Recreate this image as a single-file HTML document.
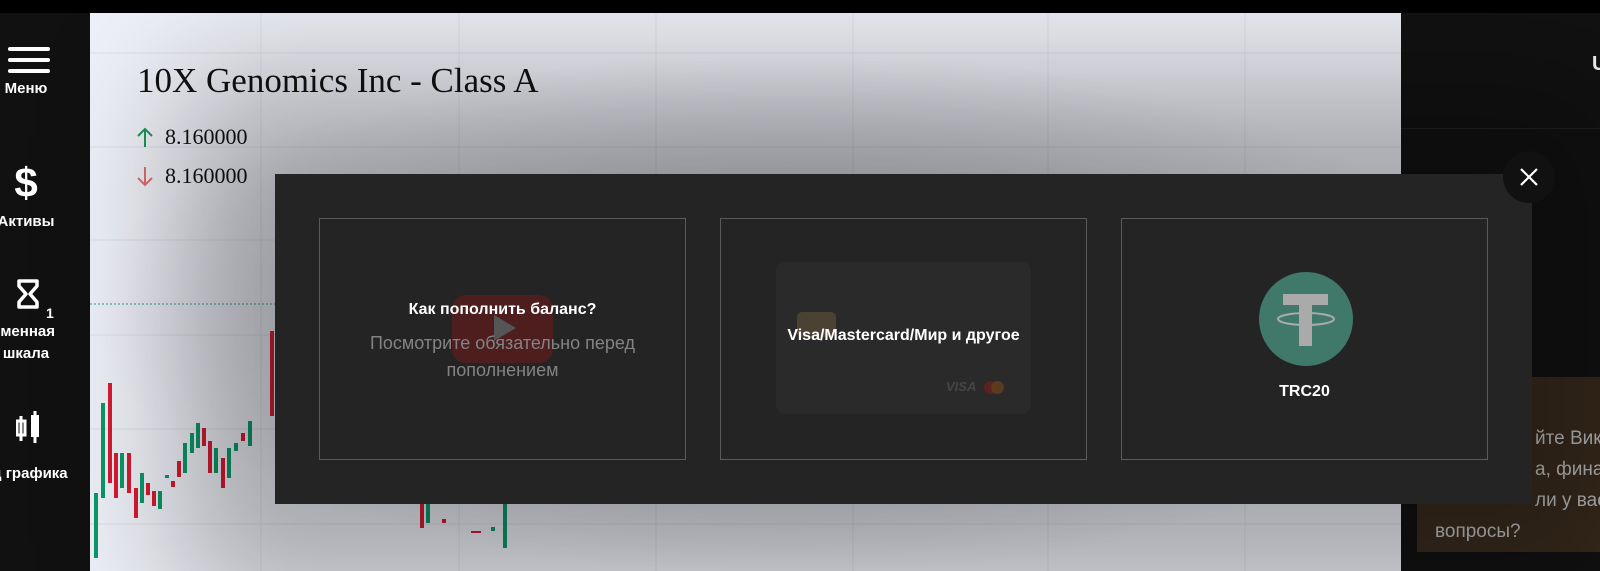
<!DOCTYPE html>
<html><head><meta charset="utf-8"><style>
*{margin:0;padding:0;box-sizing:border-box}
body{width:1600px;height:571px;overflow:hidden;background:#000;position:relative;font-family:"Liberation Sans",sans-serif}
.abs{position:absolute}
#side{left:0;top:13px;width:90px;height:558px;background:#111;color:#fff}
.lbl{position:absolute;width:90px;text-align:center;font-weight:bold;font-size:15px;white-space:nowrap}
#chart{left:90px;top:13px;width:1311px;height:558px;background:#eff1f8;overflow:hidden}
#right{left:1401px;top:13px;width:199px;height:558px;background:#121212}
#modal{left:275px;top:174px;width:1257px;height:330px;background:#242424;box-shadow:0 0 240px 100px rgba(0,0,0,.3)}
.card{position:absolute;top:44px;width:367px;height:242px;border:1px solid #5a5a5a}
.t{position:absolute;width:100%;text-align:center;color:#fff;font-weight:bold;font-size:16px}
</style></head><body>
<div id="chart" class="abs">
<svg width="1311" height="558" style="position:absolute;left:0;top:0">
<g stroke="#dfe1e8" stroke-width="1">
<line x1="171" y1="0" x2="171" y2="558"/><line x1="369" y1="0" x2="369" y2="558"/><line x1="566" y1="0" x2="566" y2="558"/><line x1="763" y1="0" x2="763" y2="558"/><line x1="958" y1="0" x2="958" y2="558"/><line x1="1155" y1="0" x2="1155" y2="558"/>
<line x1="0" y1="40" x2="1311" y2="40"/><line x1="0" y1="134" x2="1311" y2="134"/><line x1="0" y1="227" x2="1311" y2="227"/><line x1="0" y1="322" x2="1311" y2="322"/><line x1="0" y1="416" x2="1311" y2="416"/><line x1="0" y1="511" x2="1311" y2="511"/>
</g>
<line x1="0" y1="291" x2="190" y2="291" stroke="#2aa38a" stroke-dasharray="2,2"/>
<g>
<rect x="4" y="480" width="4" height="65" fill="#0a9a6a"/>
<rect x="11" y="390" width="4" height="95" fill="#0a9a6a"/>
<rect x="18" y="370" width="4" height="100" fill="#d91a33"/>
<rect x="24" y="440" width="4" height="45" fill="#d91a33"/>
<rect x="30" y="440" width="4" height="35" fill="#0a9a6a"/>
<rect x="37" y="440" width="4" height="40" fill="#d91a33"/>
<rect x="44" y="475" width="4" height="30" fill="#d91a33"/>
<rect x="50" y="460" width="4" height="30" fill="#0a9a6a"/>
<rect x="56" y="470" width="4" height="12" fill="#d91a33"/>
<rect x="62" y="478" width="4" height="15" fill="#d91a33"/>
<rect x="68" y="478" width="4" height="18" fill="#0a9a6a"/>
<rect x="75" y="462" width="4" height="3" fill="#0a9a6a"/>
<rect x="81" y="468" width="4" height="6" fill="#d91a33"/>
<rect x="87" y="448" width="4" height="16" fill="#d91a33"/>
<rect x="93" y="430" width="4" height="30" fill="#0a9a6a"/>
<rect x="100" y="420" width="4" height="20" fill="#0a9a6a"/>
<rect x="106" y="410" width="4" height="25" fill="#0a9a6a"/>
<rect x="112" y="415" width="4" height="18" fill="#d91a33"/>
<rect x="118" y="428" width="4" height="32" fill="#d91a33"/>
<rect x="124" y="435" width="4" height="25" fill="#0a9a6a"/>
<rect x="131" y="445" width="4" height="30" fill="#d91a33"/>
<rect x="137" y="435" width="4" height="30" fill="#0a9a6a"/>
<rect x="144" y="430" width="4" height="8" fill="#0a9a6a"/>
<rect x="151" y="420" width="4" height="8" fill="#d91a33"/>
<rect x="158" y="408" width="4" height="25" fill="#0a9a6a"/>
<rect x="180" y="318" width="4" height="85" fill="#d91a33"/>
<rect x="330" y="490" width="4" height="25" fill="#d91a33"/>
<rect x="336" y="490" width="4" height="20" fill="#0a9a6a"/>
<rect x="352" y="506" width="4" height="4" fill="#d91a33"/>
<rect x="381" y="518" width="10" height="2" fill="#d91a33"/>
<rect x="401" y="514" width="4" height="4" fill="#0a9a6a"/>
<rect x="413" y="490" width="4" height="45" fill="#0a9a6a"/>
</g>
<g fill="none" stroke-width="2">
<path d="M55 134V116M48 123l7-7 7 7" stroke="#159a5a"/>
<path d="M55 154V172M48 165l7 7 7-7" stroke="#e07070"/>
</g>
</svg>
<div class="abs" style="left:47px;top:48px;font-family:'Liberation Serif',serif;font-size:35px;color:#111">10X Genomics Inc - Class A</div>
<div class="abs" style="left:75px;top:111px;font-family:'Liberation Serif',serif;font-size:22px;color:#111">8.160000</div>
<div class="abs" style="left:75px;top:150px;font-family:'Liberation Serif',serif;font-size:22px;color:#111">8.160000</div>
<div class="abs" style="left:0;top:0;width:1311px;height:558px;background:radial-gradient(ellipse 700px 260px at 700px 300px,rgba(60,60,70,.35),rgba(60,60,70,0))"></div>
</div>
<div id="side" class="abs">
<div class="abs" style="left:8px;top:34px;width:42px;height:4px;background:#fff;border-radius:2px"></div>
<div class="abs" style="left:8px;top:45px;width:42px;height:4px;background:#fff;border-radius:2px"></div>
<div class="abs" style="left:8px;top:56px;width:42px;height:4px;background:#fff;border-radius:2px"></div>
<div class="lbl" style="left:-19px;top:67px">Меню</div>
<div class="lbl" style="left:-19px;top:146px;font-size:42px">$</div>
<div class="lbl" style="left:-19px;top:200px">Активы</div>
<svg class="abs" style="left:16px;top:266px" width="40" height="40"><path d="M3 2h18v5l-7 8 7 8v5H3v-5l7-8-7-8z" fill="none" stroke="#fff" stroke-width="3.5" stroke-linejoin="round"/><text x="30" y="39" fill="#fff" font-size="14" font-weight="bold" font-family="Liberation Sans">1</text></svg>
<div class="lbl" style="left:-26px;top:310px">ременная</div>
<div class="lbl" style="left:-19px;top:332px">шкала</div>
<svg class="abs" style="left:16px;top:398px" width="30" height="40"><rect x="1" y="10" width="8" height="14" fill="none" stroke="#fff" stroke-width="3"/><line x1="5" y1="5" x2="5" y2="30" stroke="#fff" stroke-width="3"/><rect x="15" y="4" width="8" height="22" fill="#fff"/><line x1="19" y1="0" x2="19" y2="32" stroke="#fff" stroke-width="3"/></svg>
<div class="lbl" style="left:-8px;top:452px;width:80px;text-align:left">д графика</div>
</div>
<div id="right" class="abs">
<div class="abs" style="left:0;top:115px;width:199px;height:1px;background:#222"></div>
<div class="abs" style="left:191px;top:40px;color:#fff;font-weight:bold;font-size:20px">U</div>
<div class="abs" style="left:16px;top:364px;width:183px;height:175px;background:#3b2c1e"></div>
<div class="abs" style="left:34px;top:410px;color:#c4c4c4;font-size:19px;line-height:31px;white-space:nowrap">
<div style="margin-left:100px">йте Вик</div><div style="margin-left:100px">а, фина</div><div style="margin-left:100px">ли у вас</div><div>вопросы?</div></div>
</div>
<div id="modal" class="abs">
<div class="card" style="left:44px">
<div class="abs" style="left:132px;top:76px;width:101px;height:68px;background:#4e1e1e;border-radius:14px"></div>
<div class="abs" style="left:174px;top:96px;width:0;height:0;border-left:22px solid #555;border-top:13px solid transparent;border-bottom:13px solid transparent"></div>
<div class="t" style="top:82px">Как пополнить баланс?</div>
<div class="t" style="top:111px;color:#838383;font-weight:normal;font-size:18px;line-height:27px">Посмотрите обязательно перед<br>пополнением</div>
</div>
<div class="card" style="left:445px">
<div class="abs" style="left:55px;top:43px;width:255px;height:152px;background:#2a2a2a;border-radius:9px"></div>
<div class="abs" style="left:76px;top:93px;width:39px;height:25px;background:#4b4233;border-radius:5px"></div>
<div class="abs" style="left:225px;top:160px;color:#464646;font-weight:bold;font-style:italic;font-size:13px">VISA</div>
<div class="abs" style="left:263px;top:162px;width:13px;height:13px;border-radius:50%;background:#5a2222"></div>
<div class="abs" style="left:270px;top:162px;width:13px;height:13px;border-radius:50%;background:#5e3d1e;opacity:.9"></div>
<div class="t" style="top:108px">Visa/Mastercard/Мир и другое</div>
</div>
<div class="card" style="left:846px">
<svg class="abs" style="left:137px;top:53px" width="94" height="94"><circle cx="47" cy="47" r="47" fill="#40796a"/><rect x="24" y="22" width="45" height="11" fill="#aaa"/><rect x="40" y="22" width="13" height="52" fill="#aaa"/><ellipse cx="47" cy="47" rx="28" ry="6" fill="none" stroke="#aaa" stroke-width="2"/></svg>
<div class="t" style="top:164px">TRC20</div>
</div>
</div>
<div class="abs" style="left:1503px;top:151px;width:52px;height:52px;border-radius:50%;background:#111"></div>
<svg class="abs" style="left:1519px;top:167px" width="20" height="20"><path d="M2 2L18 18M18 2L2 18" stroke="#fff" stroke-width="2.2"/></svg>
</body></html>
